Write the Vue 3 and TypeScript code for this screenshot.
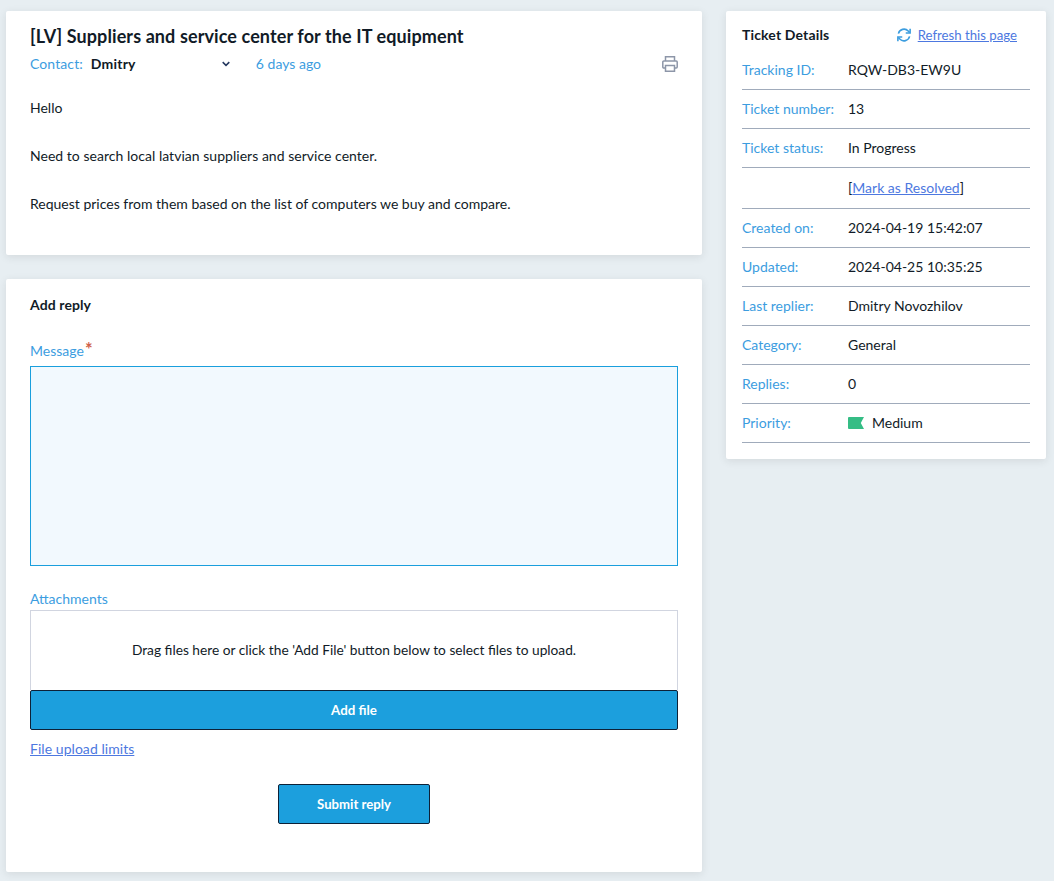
<script setup lang="ts">
interface Row { label: string; value: string; kind?: string }
const rows: Row[] = [
  { label: 'Tracking ID:', value: 'RQW-DB3-EW9U' },
  { label: 'Ticket number:', value: '13' },
  { label: 'Ticket status:', value: 'In Progress' },
  { label: '', value: '', kind: 'resolve' },
  { label: 'Created on:', value: '2024-04-19 15:42:07' },
  { label: 'Updated:', value: '2024-04-25 10:35:25' },
  { label: 'Last replier:', value: 'Dmitry Novozhilov' },
  { label: 'Category:', value: 'General' },
  { label: 'Replies:', value: '0' },
  { label: 'Priority:', value: 'Medium', kind: 'priority' },
]
</script>

<template>
  <div class="page">
    <main class="main">
      <section class="card ticket">
        <h1 class="title">[LV] Suppliers and service center for the IT equipment</h1>
        <div class="meta">
          <span class="blue">Contact:</span>
          <span class="contact">Dmitry</span>
          <svg class="chev" width="8" height="6" viewBox="0 0 8 6"><path d="M.7 1.1 4 4.4l3.3-3.3" fill="none" stroke="#24385f" stroke-width="1.5"/></svg>
          <span class="blue ago">6 days ago</span>
          <svg class="print" width="16" height="16" viewBox="0 0 16 16" fill="none" stroke="#8d96a8" stroke-width="1.5">
            <path d="M3.5 5V.8h9V5"/>
            <path d="M3.5 12H1.8A1 1 0 0 1 .8 11V6a1 1 0 0 1 1-1h12.4a1 1 0 0 1 1 1v5a1 1 0 0 1-1 1h-1.7"/>
            <path d="M3.5 9.4h9v5.8h-9z"/>
          </svg>
        </div>
        <div class="body">
          <p>Hello</p>
          <p class="need">Need to search local latvian suppliers and service center.</p>
          <p>Request prices from them based on the list of computers we buy and compare.</p>
        </div>
      </section>

      <section class="card reply">
        <h2 class="reply-title">Add reply</h2>
        <div class="msg-label"><span class="blue">Message</span><span class="req">*</span></div>
        <textarea class="input"></textarea>
        <div class="att-label blue">Attachments</div>
        <div class="drop">Drag files here or click the 'Add File' button below to select files to upload.</div>
        <button class="btn add" type="button">Add file</button>
        <a class="link limits" href="#">File upload limits</a>
        <div class="submit-wrap"><button class="btn submit" type="button">Submit reply</button></div>
      </section>
    </main>

    <aside class="card side">
      <div class="side-head">
        <h3 class="side-title">Ticket Details</h3>
        <svg class="refresh" width="14" height="14" viewBox="0 0 16 16" fill="none" stroke="#3c9ddf" stroke-width="1.8">
          <path d="M1.6 6.4A6.6 6.6 0 0 1 12.8 3.4l1.6 1.8"/>
          <path d="M15 .8v5H10"/>
          <path d="M14.4 9.6A6.6 6.6 0 0 1 3.2 12.6l-1.6-1.8"/>
          <path d="M1 15.2v-5h5"/>
        </svg>
        <a class="link refresh-link" href="#">Refresh this page</a>
      </div>
      <div v-for="r in rows" :key="r.label + r.kind" class="row" :class="{ tall: r.kind === 'resolve' }">
        <span class="blue label">{{ r.label }}</span>
        <span v-if="r.kind === 'resolve'">[<a class="link" href="#">Mark as Resolved</a>]</span>
        <span v-else-if="r.kind === 'priority'" class="prio">
          <svg width="16" height="12" viewBox="0 0 16 12"><path d="M1 0h15l-3.2 6L16 12H1a1 1 0 0 1-1-1V1a1 1 0 0 1 1-1z" fill="#35bd85"/></svg>
          {{ r.value }}
        </span>
        <span v-else>{{ r.value }}</span>
      </div>
    </aside>
  </div>
</template>

<style>
html, body { background: #e7eef2; }
</style>

<style scoped>
.page {
  display: flex;
  align-items: flex-start;
  gap: 24px;
  padding: 11px 8px 9px 6px;
  height: 881px;
  box-sizing: border-box;
  background: #e7eef2;
  font: 14px/20px Lato, sans-serif;
  color: #111b27;
}
.main { width: 696px; display: flex; flex-direction: column; gap: 24px; }
.card {
  background: #fff;
  border-radius: 2px;
  box-shadow: 0 2px 8px rgba(38, 40, 42, 0.1);
  box-sizing: border-box;
}
.blue { color: #3c9ddf; }
.link { color: #4d78e0; text-decoration: underline; }
.ticket { height: 244px; padding: 11px 24px 0; }
.title { margin: 0; font-size: 18px; line-height: 28px; font-weight: 700; letter-spacing: 0.1px; }
.meta { display: flex; align-items: center; height: 20px; margin-top: 4px; }
.meta > .blue:first-child { letter-spacing: 0.1px; }
.contact { margin-left: 8px; width: 131px; font-weight: 700; letter-spacing: 0.2px; }
.chev { margin-right: 26px; }
.ago { flex: 1; }
.print { display: block; }
.body { margin-top: 22px; line-height: 24px; }
.body p { margin: 0 0 24px; }
.body .need { letter-spacing: 0.03px; }
.reply { height: 593px; padding: 16px 24px 0; display: flex; flex-direction: column; }
.reply-title { margin: 0; font-size: 14px; line-height: 20px; font-weight: 700; letter-spacing: 0.1px; }
.msg-label { margin-top: 26px; height: 20px; position: relative; }
.req { position: absolute; left: 55px; top: -2px; color: #cf5f4a; font-size: 18px; font-weight: 700; }
.input {
  display: block;
  margin-top: 5px;
  width: 100%;
  height: 200px;
  box-sizing: border-box;
  resize: none;
  border: 1px solid #1a9fdd;
  border-radius: 0;
  background: #f2f9fe;
  outline: none;
}
.att-label { margin-top: 23px; height: 21px; }
.drop {
  height: 80px;
  box-sizing: border-box;
  border: 1px solid #d1d5e0;
  border-bottom: 0;
  padding-bottom: 2px;
  font-size: 13.72px;
  display: flex;
  align-items: center;
  justify-content: center;
}
.btn {
  height: 40px;
  box-sizing: border-box;
  background: #1c9fdd;
  border: 1px solid #0d2137;
  border-radius: 2px;
  color: #fff;
  font: 700 13.3px/20px Lato, sans-serif;
  padding: 0;
}
.add { width: 100%; display: block; }
.limits { margin-top: 9px; height: 20px; align-self: flex-start; letter-spacing: 0.05px; }
.submit-wrap { margin-top: 25px; display: flex; justify-content: center; }
.submit { width: 152px; font-size: 13.15px; }
.side { width: 320px; height: 448px; padding: 14px 16px 0; }
.side-head { display: flex; align-items: center; height: 20px; margin-bottom: 6px; }
.side-title { margin: 0; font-size: 14px; line-height: 20px; font-weight: 700; flex: 1; letter-spacing: 0.15px; }
.refresh { margin-right: 7px; }
.refresh-link { margin-right: 13px; font-size: 13.2px; }
.row {
  display: flex;
  align-items: center;
  height: 39px;
  box-sizing: border-box;
  border-bottom: 1px solid #a0abbb;
}
.row.tall { height: 41px; }
.label { width: 106px; flex: none; }
.prio { display: flex; align-items: center; gap: 8px; }
</style>
